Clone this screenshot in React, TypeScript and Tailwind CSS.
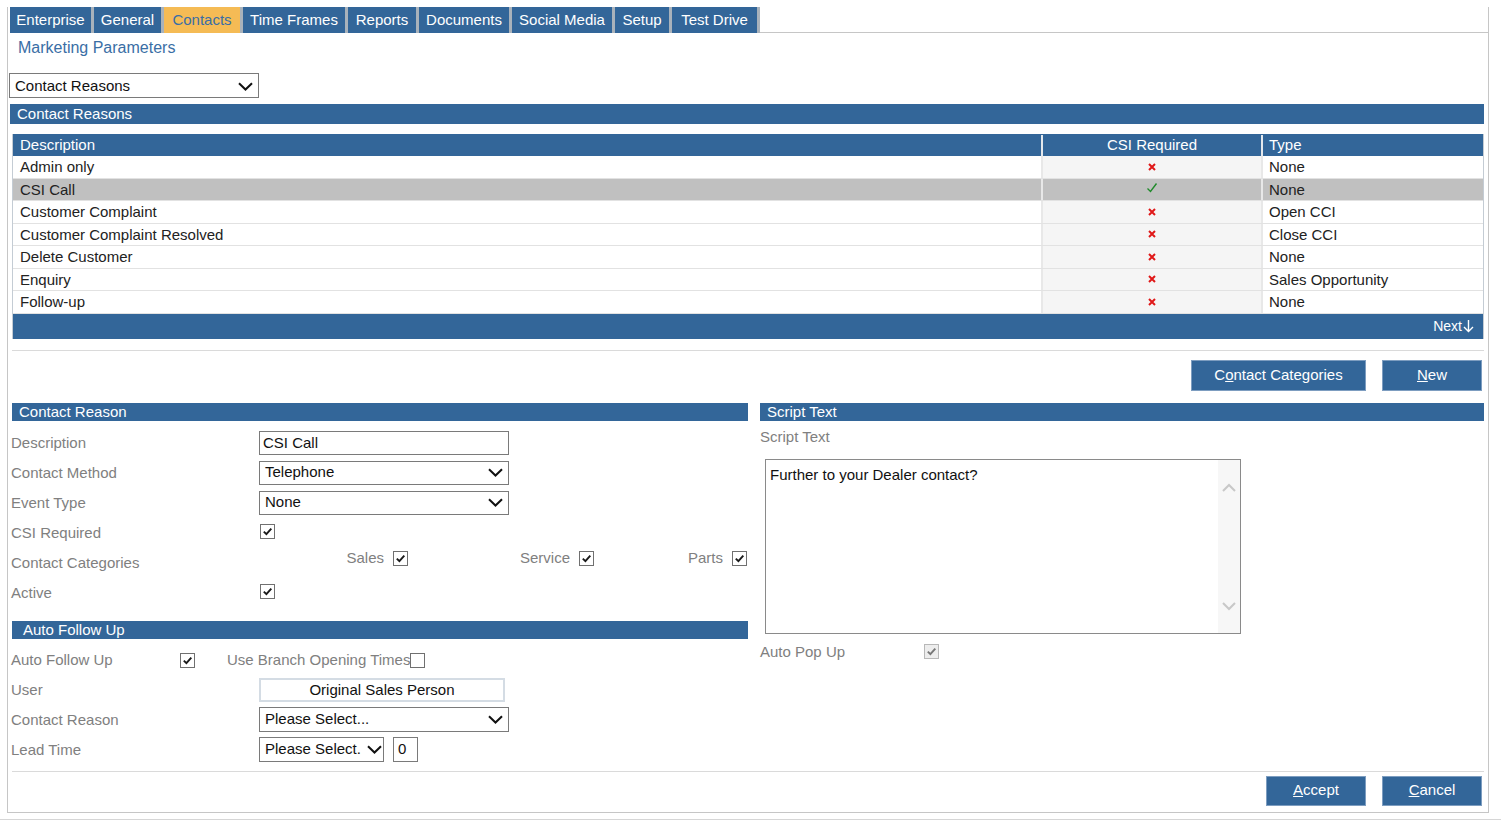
import React from 'react';

const tabs = [
  { label: 'Enterprise', w: 'w-[84px]' },
  { label: 'General', w: 'w-[70px]' },
  { label: 'Contacts', w: 'w-[79px]', active: true },
  { label: 'Time Frames', w: 'w-[105px]' },
  { label: 'Reports', w: 'w-[71px]' },
  { label: 'Documents', w: 'w-[93px]' },
  { label: 'Social Media', w: 'w-[103px]' },
  { label: 'Setup', w: 'w-[57px]' },
  { label: 'Test Drive', w: 'w-[88px]' },
];

const reasons = [
  { desc: 'Admin only', csi: false, type: 'None' },
  { desc: 'CSI Call', csi: true, type: 'None', selected: true },
  { desc: 'Customer Complaint', csi: false, type: 'Open CCI' },
  { desc: 'Customer Complaint Resolved', csi: false, type: 'Close CCI' },
  { desc: 'Delete Customer', csi: false, type: 'None' },
  { desc: 'Enquiry', csi: false, type: 'Sales Opportunity' },
  { desc: 'Follow-up', csi: false, type: 'None' },
];

function Chevron({ color = '#111' }: { color?: string }) {
  return (
    <svg width="15" height="9" viewBox="0 0 15 9">
      <path d="M1 1.2 L7.5 7.5 L14 1.2" stroke={color} strokeWidth="2" fill="none" />
    </svg>
  );
}

function Select({ value, className }: { value: string; className: string }) {
  return (
    <div className={`flex items-center justify-between border border-[#7a7a7a] bg-white pl-[5px] pr-[5px] text-[15px] text-[#111] ${className}`}>
      <span className="whitespace-nowrap">{value}</span>
      <span className="ml-[6px] shrink-0">
        <Chevron />
      </span>
    </div>
  );
}

function Check({ checked = true, disabled = false }: { checked?: boolean; disabled?: boolean }) {
  return (
    <span
      className={`inline-flex h-[15px] w-[15px] shrink-0 items-center justify-center border ${
        disabled ? 'border-[#b8b8b8] bg-[#ededed]' : 'border-[#707070] bg-white'
      }`}
    >
      {checked && (
        <svg width="11" height="11" viewBox="0 0 11 11">
          <path d="M1.8 5.6 L4.4 8.2 L9.3 2.6" stroke={disabled ? '#777' : '#1a1a1a'} strokeWidth="1.9" fill="none" />
        </svg>
      )}
    </span>
  );
}

function Cross() {
  return (
    <svg width="8" height="8" viewBox="0 0 8 8">
      <path d="M1 1 L7 7 M7 1 L1 7" stroke="#e01818" strokeWidth="2" />
    </svg>
  );
}

function Tick() {
  return (
    <svg width="12" height="12" viewBox="0 0 12 12" className="-mt-[2px]">
      <path d="M1.5 6.5 L4.5 9.5 L10.5 1.5" stroke="#1f8a2a" strokeWidth="1.4" fill="none" />
    </svg>
  );
}

function Btn({ pre = '', u, post, className }: { pre?: string; u: string; post: string; className: string }) {
  return (
    <button className={`flex items-center justify-center border border-[#7d9dc0] bg-[#336699] text-[15px] text-white ${className}`}>
      {pre}
      <span className="underline">{u}</span>
      {post}
    </button>
  );
}

function Header({ title, className = '' }: { title: string; className?: string }) {
  return (
    <div className={`flex h-[18px] items-center bg-[#336699] pl-[7px] pt-px text-[15px] text-white ${className}`}>{title}</div>
  );
}

function Row({ label, children }: { label: string; children?: React.ReactNode }) {
  return (
    <div className="flex h-[30px] items-center">
      <div className="-ml-px w-[248px] pt-[2px] text-[15px] text-[#808080]">{label}</div>
      {children}
    </div>
  );
}

export default function App() {
  return (
    <div className="relative h-[821px] w-[1501px] overflow-hidden bg-white font-['Liberation_Sans',Arial,sans-serif] text-[#222]">
      <div className="ml-[7px] mt-[7px] flex h-[806px] w-[1482px] flex-col border-x border-b border-[#c6c6c6]">
        {/* Tabs */}
        <div className="flex h-[26px] pl-[2px]">
          {tabs.map((t) => (
            <div
              key={t.label}
              className={`flex h-[26px] shrink-0 items-center justify-center border-r-[3px] border-[#a9b2bb] pt-px text-[15px] ${t.w} ${
                t.active ? 'bg-[#f5bb55] text-[#3a6ea5]' : 'bg-[#336699] text-white'
              }`}
            >
              {t.label}
            </div>
          ))}
          <div className="flex-1 border-b border-[#c6c6c6]" />
        </div>

        <div className="flex h-[28px] items-center pl-[10px] pt-px text-[16px] text-[#3a6ea5]">Marketing Parameters</div>

        <Select value="Contact Reasons" className="ml-px mt-[12px] h-[25px] w-[250px] pt-px" />

        <Header title="Contact Reasons" className="ml-[2px] mt-[6px] h-[20px] w-[1474px]" />

        {/* Table */}
        <div className="ml-[4px] mt-[10px] w-[1472px] border-x border-[#c4ccd4]">
          <div className="flex h-[22px] bg-[#336699] pt-px text-[15px] text-white">
            <div className="flex w-[1028px] items-center pl-[7px]">Description</div>
            <div className="flex w-[220px] items-center justify-center border-l-2 border-[#e4e8ec]">CSI Required</div>
            <div className="flex flex-1 items-center border-l-2 border-[#e4e8ec] pl-[6px]">Type</div>
          </div>
          {reasons.map((r) => (
            <div
              key={r.desc}
              className={`flex h-[22.5px] border-b border-[#e2e2e2] text-[15px] text-[#222] ${r.selected ? 'bg-[#c0c0c0]' : 'bg-white'}`}
            >
              <div className="flex w-[1028px] items-center pl-[7px] pt-px">{r.desc}</div>
              <div
                className={`flex w-[220px] items-center justify-center border-l-2 border-[#e8e8e8] ${
                  r.selected ? 'bg-[#c0c0c0]' : 'bg-[#f5f5f5]'
                }`}
              >
                {r.csi ? <Tick /> : <Cross />}
              </div>
              <div className="flex flex-1 items-center border-l-2 border-[#e8e8e8] pl-[6px] pt-px">{r.type}</div>
            </div>
          ))}
          <div className="flex h-[25px] items-center justify-end bg-[#336699] pr-[9px] text-[14px] text-white">
            Next
            <svg width="11" height="14" viewBox="0 0 11 14" className="ml-[1px]">
              <path d="M5.5 1 L5.5 12.5 M1 8 L5.5 12.5 L10 8" stroke="#fff" strokeWidth="1.4" fill="none" />
            </svg>
          </div>
        </div>

        <div className="ml-[4px] mt-[11px] w-[1472px] border-t border-[#dadada]" />

        <div className="mt-[9px] flex w-[1474px] justify-end gap-[16px]">
          <Btn pre="C" u="o" post="ntact Categories" className="h-[31px] w-[175px]" />
          <Btn u="N" post="ew" className="h-[31px] w-[100px]" />
        </div>

        {/* Detail area */}
        <div className="mt-[12px] flex items-start">
          <div className="ml-[4px] w-[736px]">
            <Header title="Contact Reason" />
            <div className="mt-[7px]">
              <Row label="Description">
                <div className="flex h-[24px] w-[250px] items-center border border-[#7a7a7a] pl-[3px] pt-px text-[15px] text-[#111]">CSI Call</div>
              </Row>
              <Row label="Contact Method">
                <Select value="Telephone" className="h-[24px] w-[250px]" />
              </Row>
              <Row label="Event Type">
                <Select value="None" className="h-[24px] w-[250px]" />
              </Row>
              <Row label="CSI Required">
                <span className="ml-px -mt-[1px]">
                  <Check />
                </span>
              </Row>
              <Row label="Contact Categories">
                <div className="-mt-[8px] flex text-[15px] text-[#808080]">
                  <div className="flex w-[149px] items-center justify-end gap-[9px]">
                    Sales <Check />
                  </div>
                  <div className="flex w-[186px] items-center justify-end gap-[9px]">
                    Service <Check />
                  </div>
                  <div className="flex w-[153px] items-center justify-end gap-[9px]">
                    Parts <Check />
                  </div>
                </div>
              </Row>
              <Row label="Active">
                <span className="ml-px -mt-[1px]">
                  <Check />
                </span>
              </Row>
            </div>

            <Header title="Auto Follow Up" className="mt-[13px] h-[17px] pl-[11px]" />
            <div className="mt-[6px]">
              <div className="flex h-[30px] items-center pt-[2px] text-[15px] text-[#808080]">
                <div className="-ml-px w-[169px]">Auto Follow Up</div>
                <Check />
                <span className="ml-[32px]">Use Branch Opening Times</span>
                <Check checked={false} />
              </div>
              <Row label="User">
                <div className="flex h-[24px] w-[246px] items-center justify-center border-2 border-[#d4dce4] pt-px text-[15px] text-[#111]">
                  Original Sales Person
                </div>
              </Row>
              <Row label="Contact Reason">
                <Select value="Please Select..." className="h-[25px] w-[250px]" />
              </Row>
              <Row label="Lead Time">
                <Select value="Please Select." className="h-[25px] w-[125px]" />
                <div className="ml-[9px] flex h-[25px] w-[25px] items-center border border-[#7a7a7a] pl-[4px] text-[15px] text-[#111]">0</div>
              </Row>
            </div>
          </div>

          <div className="ml-[12px] w-[724px]">
            <Header title="Script Text" />
            <div className="mt-[6px] flex h-[20px] items-center pt-[2px] text-[15px] text-[#808080]">Script Text</div>
            <div className="ml-[5px] mt-[12px] flex h-[175px] w-[476px] border border-[#8a8a8a]">
              <div className="flex-1 pl-[4px] pt-[4px] text-[15px] text-[#111]">Further to your Dealer contact?</div>
              <div className="flex w-[22px] flex-col items-center justify-between bg-[#f7f7f7] pb-[22px] pt-[23px]">
                <svg width="14" height="9" viewBox="0 0 14 9">
                  <path d="M1 8 L7 2 L13 8" stroke="#c8c8c8" strokeWidth="2" fill="none" />
                </svg>
                <svg width="14" height="9" viewBox="0 0 14 9">
                  <path d="M1 1 L7 7 L13 1" stroke="#c8c8c8" strokeWidth="2" fill="none" />
                </svg>
              </div>
            </div>
            <div className="mt-[8px] flex h-[20px] items-center text-[15px] text-[#808080]">
              <div className="w-[164px] pt-[2px]">Auto Pop Up</div>
              <Check disabled />
            </div>
          </div>
        </div>

        <div className="ml-[4px] mt-[6px] w-[1472px] border-t border-[#dadada]" />
        <div className="mt-[4px] flex w-[1474px] justify-end gap-[16px]">
          <Btn u="A" post="ccept" className="h-[30px] w-[100px]" />
          <Btn u="C" post="ancel" className="h-[30px] w-[100px]" />
        </div>
      </div>
      <div className="absolute left-0 top-[819px] w-[1501px] border-t border-[#d6d6d6]" />
    </div>
  );
}
